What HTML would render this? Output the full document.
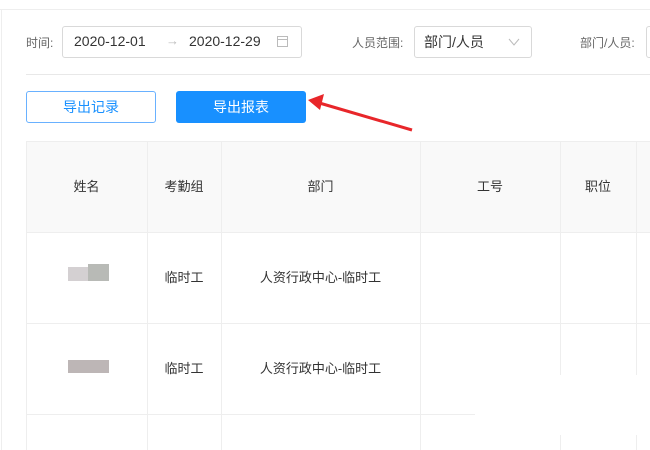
<!DOCTYPE html>
<html><head><meta charset="utf-8"><style>
*{margin:0;padding:0;box-sizing:border-box}
body{width:650px;height:450px;overflow:hidden;background:#fff;font-family:"Liberation Sans","Noto Sans CJK SC",sans-serif;position:relative;color:#333}
.a{position:absolute}
.lbl{font-size:12px;color:#666}
.box{border:1px solid #d9d9d9;border-radius:3px;background:#fff}
.c{position:absolute;font-size:13px;color:#333;text-align:center}
</style></head><body>
<div class="a" style="left:0;top:9px;width:650px;height:1px;background:#eee"></div>
<div class="a" style="left:1px;top:9px;width:1px;height:441px;background:#eee"></div>
<div class="a lbl" style="left:26px;top:34px">时间:</div>
<div class="a box" style="left:62px;top:26px;width:240px;height:32px"></div>
<div class="a" style="left:74px;top:33px;font-size:14px;color:#333">2020-12-01</div>
<div class="a" style="left:166px;top:33px;font-size:13px;color:#bbb">→</div>
<div class="a" style="left:189px;top:33px;font-size:14px;color:#333">2020-12-29</div>
<div class="a" style="left:277px;top:36px;width:11px;height:11px;border:1px solid #bbb"></div>
<div class="a" style="left:277px;top:39px;width:11px;height:1px;background:#bbb"></div>
<div class="a lbl" style="left:352px;top:34px">人员范围:</div>
<div class="a box" style="left:414px;top:26px;width:118px;height:32px"></div>
<div class="a" style="left:424px;top:32px;font-size:14px">部门/人员</div>
<svg class="a" style="left:508px;top:37px" width="12" height="10"><path d="M1 2 L6 8 L11 2" fill="none" stroke="#bbb" stroke-width="1"/></svg>
<div class="a lbl" style="left:580px;top:34px">部门/人员:</div>
<div class="a box" style="left:646px;top:26px;width:20px;height:32px"></div>
<div class="a" style="left:26px;top:74px;width:624px;height:1px;background:#e8e8e8"></div>
<div class="a" style="left:26px;top:91px;width:130px;height:32px;border:1px solid #69b1ff;border-radius:3px;color:#1890ff;font-size:14px;text-align:center;line-height:30px">导出记录</div>
<div class="a" style="left:176px;top:91px;width:130px;height:32px;background:#1890ff;border-radius:3px;color:#fff;font-size:14px;text-align:center;line-height:32px">导出报表</div>
<svg class="a" style="left:300px;top:90px" width="120" height="50"><path d="M112 40 L16 12" stroke="#e8262a" stroke-width="3"/><path d="M8 10 L24 4 L20 20 Z" fill="#e8262a"/></svg>
<div class="a" style="left:26px;top:141px;width:624px;height:92px;background:#f9f9f9"></div>
<div class="a" style="left:26px;top:141px;width:624px;height:1px;background:#eee"></div>
<div class="a" style="left:26px;top:141px;width:1px;height:309px;background:#eee"></div>
<div class="a" style="left:26px;top:232px;width:624px;height:1px;background:#eee"></div>
<div class="a" style="left:26px;top:323px;width:624px;height:1px;background:#eee"></div>
<div class="a" style="left:26px;top:414px;width:624px;height:1px;background:#eee"></div>
<div class="a" style="left:147px;top:141px;width:1px;height:309px;background:#eee"></div>
<div class="a" style="left:221px;top:141px;width:1px;height:309px;background:#eee"></div>
<div class="a" style="left:420px;top:141px;width:1px;height:309px;background:#eee"></div>
<div class="a" style="left:560px;top:141px;width:1px;height:309px;background:#eee"></div>
<div class="a" style="left:636px;top:141px;width:1px;height:309px;background:#eee"></div>
<div class="c" style="left:26px;width:121px;top:176px">姓名</div>
<div class="c" style="left:147px;width:74px;top:176px">考勤组</div>
<div class="c" style="left:221px;width:199px;top:176px">部门</div>
<div class="c" style="left:420px;width:140px;top:176px">工号</div>
<div class="c" style="left:560px;width:76px;top:176px">职位</div>
<div class="a" style="left:68px;top:267px;width:20px;height:14px;background:#d4d0d2"></div>
<div class="a" style="left:88px;top:264px;width:21px;height:17px;background:#b8bab6"></div>
<div class="a" style="left:68px;top:360px;width:41px;height:13px;background:#bdb6b6"></div>
<div class="c" style="left:147px;width:74px;top:267px">临时工</div>
<div class="c" style="left:221px;width:199px;top:267px">人资行政中心-临时工</div>
<div class="c" style="left:147px;width:74px;top:358px">临时工</div>
<div class="c" style="left:221px;width:199px;top:358px">人资行政中心-临时工</div>
<div class="a" style="left:475px;top:375px;width:175px;height:60px;background:#fff"></div>
</body></html>
